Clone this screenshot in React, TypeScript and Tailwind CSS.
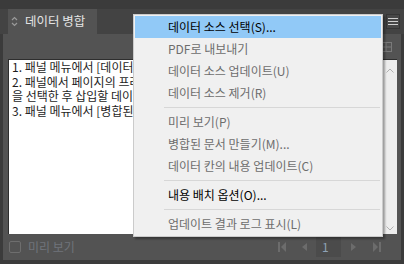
import React from "react";

const items: (
  | { t: string; d?: boolean; h?: boolean }
  | "sep"
)[] = [
  { t: "데이터 소스 선택(S)...", h: true },
  { t: "PDF로 내보내기", d: true },
  { t: "데이터 소스 업데이트(U)", d: true },
  { t: "데이터 소스 제거(R)", d: true },
  "sep",
  { t: "미리 보기(P)", d: true },
  { t: "병합된 문서 만들기(M)...", d: true },
  { t: "데이터 칸의 내용 업데이트(C)", d: true },
  "sep",
  { t: "내용 배치 옵션(O)..." },
  "sep",
  { t: "업데이트 결과 로그 표시(L)", d: true },
];

export default function App() {
  return (
    <div className="relative w-[404px] h-[264px] overflow-hidden bg-[#3b3b3b] font-['Noto_Sans_CJK_KR','Noto_Sans',sans-serif]">
      <div className="h-[9px] bg-[#3b3b3b]" />
      <div className="flex h-[25px] bg-[#434343] pl-[8px]">
        <div className="flex w-[89px] items-center gap-[7px] bg-[#535353] pl-[3px] text-[12.5px] text-[#e4e4e4]">
          <svg width="7" height="11" viewBox="0 0 7 11" fill="none" stroke="#9a9a9a" strokeWidth="1.2">
            <path d="M1 4 L3.5 1.5 L6 4" />
            <path d="M1 7 L3.5 9.5 L6 7" />
          </svg>
          <span className="leading-none">데이터 병합</span>
        </div>
        <div className="flex-1" />
        <div className="mr-[4px] mt-[5px] flex h-[15px] w-[14px] flex-col items-center justify-center gap-[2px] border border-[#363636] bg-[#474747]">
          <div className="h-[1px] w-[10px] bg-[#cfcfcf]" />
          <div className="h-[1px] w-[10px] bg-[#cfcfcf]" />
          <div className="h-[1px] w-[10px] bg-[#cfcfcf]" />
        </div>
      </div>
      <div className="mx-[3px] flex h-[226px] flex-col bg-[#535353]">
        <div className="flex h-[25px] items-center justify-end pr-[9px]">
          <svg width="12" height="10" viewBox="0 0 12 10" fill="none" stroke="#7a7a7a" strokeWidth="1">
            <rect x="0.5" y="0.5" width="11" height="9" />
            <path d="M6 0.5 V9.5 M0.5 5 H11.5" />
          </svg>
        </div>
        <div className="ml-[5px] mr-[4px] flex h-[175px] border-l border-t border-[#2e2e2e] bg-white">
          <div className="min-w-0 flex-1 overflow-hidden whitespace-nowrap pl-[3px] text-[12px] leading-[14.5px] text-[#1e1e1e]">
            <div>1. 패널 메뉴에서 [데이터 소스 선택]을 선택합니다.</div>
            <div>2. 패널에서 페이지의 프레임으로 데이터 필드를 드래그하거나, 텍스트 프레임</div>
            <div>을 선택한 후 삽입할 데이터 필드를 클릭합니다.</div>
            <div>3. 패널 메뉴에서 [병합된 문서 만들기]를 선택합니다.</div>
          </div>
          <div className="flex w-[14px] shrink-0 flex-col items-center justify-between bg-[#ededed] pb-[3px] pt-[8px]">
            <svg width="8" height="5" viewBox="0 0 8 5" fill="none" stroke="#b0b0b0" strokeWidth="1">
              <path d="M0.5 4.5 L4 1 L7.5 4.5" />
            </svg>
            <svg width="8" height="5" viewBox="0 0 8 5" fill="none" stroke="#b0b0b0" strokeWidth="1">
              <path d="M0.5 0.5 L4 4 L7.5 0.5" />
            </svg>
          </div>
        </div>
        <div className="flex flex-1 items-center pl-[6px] pr-[20px]">
          <div className="h-[12px] w-[12px] rounded-[2px] border border-[#6e6e6e]" />
          <span className="ml-[7px] text-[12px] leading-none text-[#70737b]">미리 보기</span>
          <div className="flex-1" />
          <svg width="8" height="10" viewBox="0 0 8 10" fill="#6c6c6c">
            <rect x="0" y="0" width="2" height="10" />
            <path d="M8 0 L3 5 L8 10 Z" />
          </svg>
          <svg className="ml-[16px]" width="5" height="8" viewBox="0 0 5 8" fill="#6c6c6c">
            <path d="M5 0 L0 4 L5 8 Z" />
          </svg>
          <div className="ml-[9px] flex h-[20px] w-[25px] items-center bg-[#4b4b4b] pl-[6px] text-[12px] leading-none text-[#8ea2b6]">
            1
          </div>
          <svg className="ml-[10px]" width="5" height="8" viewBox="0 0 5 8" fill="#6c6c6c">
            <path d="M0 0 L5 4 L0 8 Z" />
          </svg>
          <svg className="ml-[17px]" width="8" height="10" viewBox="0 0 8 10" fill="#6c6c6c">
            <path d="M0 0 L5 5 L0 10 Z" />
            <rect x="6" y="0" width="2" height="10" />
          </svg>
        </div>
      </div>

      <div className="absolute left-[133px] top-[14px] w-[250px] border border-[#cbcbcb] bg-[#f0f0f0] p-[1px] shadow-[2px_2px_2px_rgba(0,0,0,0.35)]">
        {items.map((it, i) =>
          it === "sep" ? (
            <div key={i} className="flex h-[7px] items-center pl-[29px] pr-[1px]">
              <div className="h-[1px] w-full bg-[#d7d7d7]" />
            </div>
          ) : (
            <div
              key={i}
              className={
                "flex h-[22px] items-center pl-[33px] text-[12px] leading-none " +
                (it.h ? "bg-[#91c9f7] text-black" : it.d ? "text-[#6d6d6d]" : "text-black")
              }
            >
              {it.t}
            </div>
          )
        )}
      </div>
    </div>
  );
}
